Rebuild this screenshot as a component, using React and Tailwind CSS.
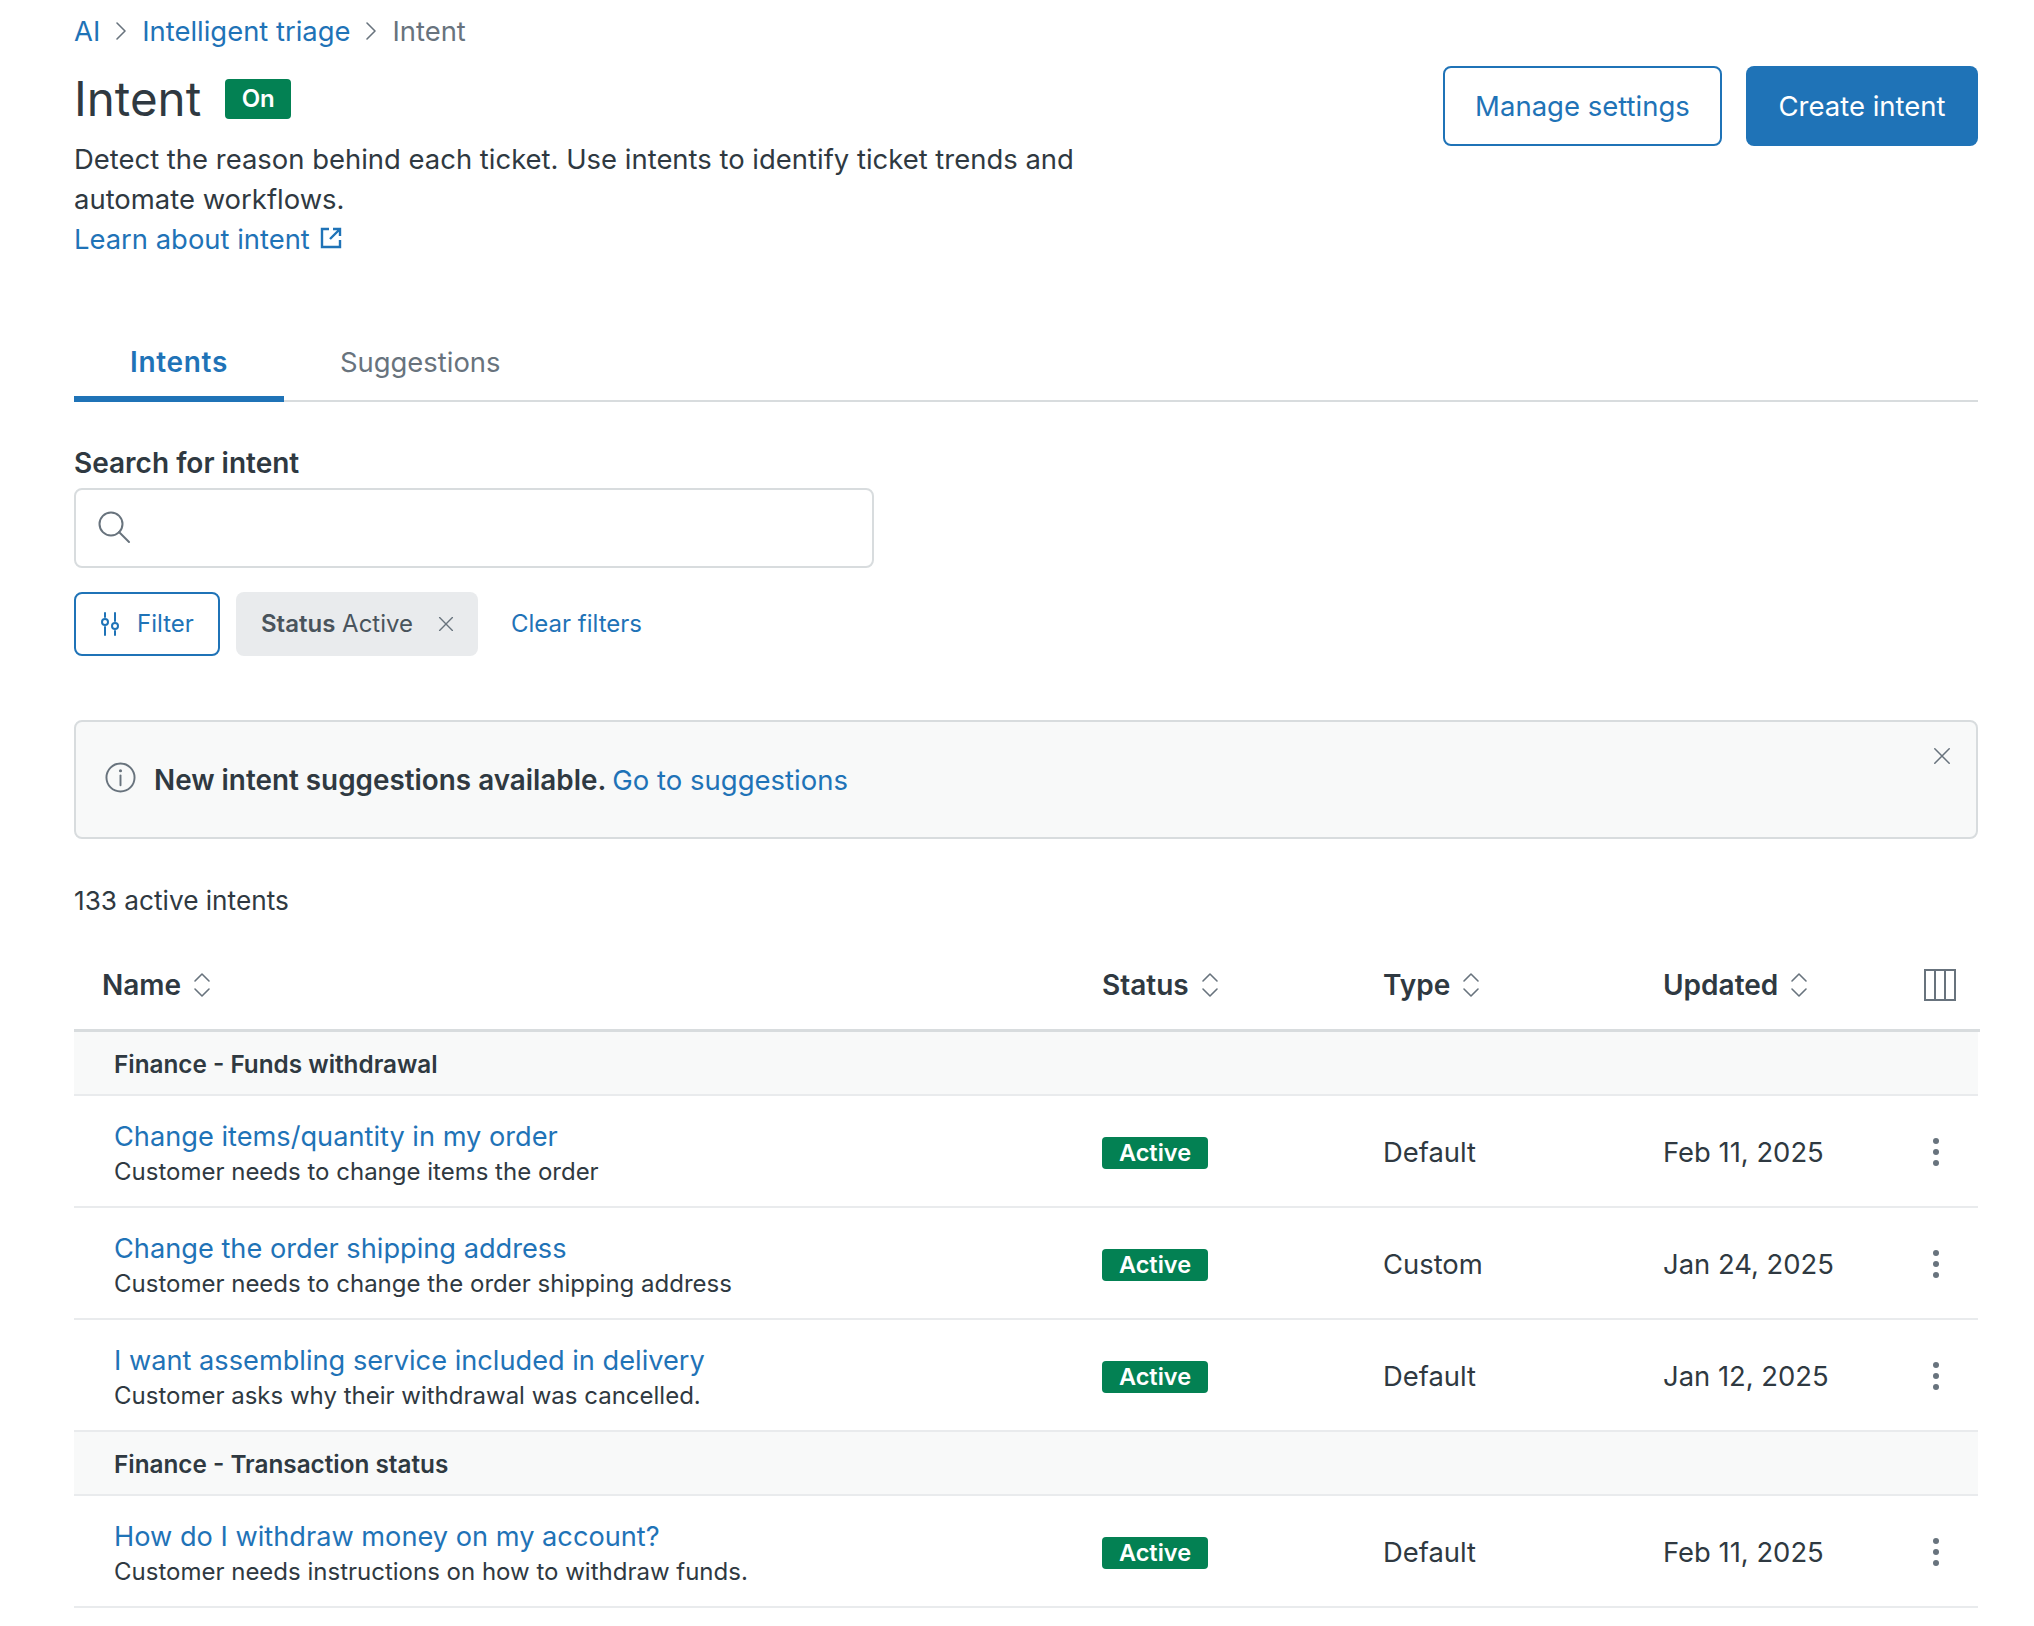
import React from 'react'

const Sort = () => (
  <svg width="20" height="28" viewBox="0 0 20 28" fill="none" stroke="#68737d" strokeWidth="1.6" strokeLinecap="round" strokeLinejoin="round">
    <path d="M3 10 L10 3 L17 10" />
    <path d="M3 18 L10 25 L17 18" />
  </svg>
)

const Kebab = () => (
  <svg width="8" height="28" viewBox="0 0 8 28" fill="#68737d">
    <circle cx="4" cy="3" r="3" />
    <circle cx="4" cy="14" r="3" />
    <circle cx="4" cy="25" r="3" />
  </svg>
)

const Cross = ({ size = 20, color = '#68737d' }) => (
  <svg width={size} height={size} viewBox="0 0 20 20" fill="none" stroke={color} strokeWidth="1.7" strokeLinecap="round">
    <path d="M2 2 L18 18 M18 2 L2 18" />
  </svg>
)

const Chevron = () => (
  <svg width="14" height="20" viewBox="0 0 14 20" fill="none" stroke="#68737d" strokeWidth="1.6" strokeLinecap="round" strokeLinejoin="round">
    <path d="M3 2 L11 10 L3 18" />
  </svg>
)

const Row = ({ title, desc, type, date }) => (
  <div className="grid grid-cols-[1028px_281px_280px_1fr] h-[112px] border-b-2 border-[#e9ebed] items-center">
    <div className="pl-[40px] pt-[1px]">
      <div className="text-[#1f73b7] text-[27.2px] leading-[40px]">{title}</div>
      <div className="text-[#2f3941] text-[24px] leading-[30px]">{desc}</div>
    </div>
    <div>
      <span className="inline-flex items-center justify-center w-[106px] h-[32px] rounded-[4px] bg-[#038153] text-white text-[23.5px] font-semibold">Active</span>
    </div>
    <div className="text-[#2f3941] pt-[2px]">{type}</div>
    <div className="flex items-center justify-between pr-[38px] pt-[2px] text-[#2f3941]">
      <span>{date}</span>
      <Kebab />
    </div>
  </div>
)

const Group = ({ name }) => (
  <div className="h-[64px] bg-[#f8f9f9] border-b-2 border-[#e9ebed] pl-[40px] pt-[1px] flex items-center text-[#2f3941] text-[24.3px] font-semibold">
    {name}
  </div>
)

const HeadCell = ({ label, className }) => (
  <div className={'flex items-center gap-[11px] font-semibold text-[28px] text-[#2f3941] ' + (className || '')}>
    {label}
    <Sort />
  </div>
)

export default function App() {
  return (
    <div className="bg-white min-h-[1626px] pl-[74px] pr-[56px] pt-[11px] text-[27.4px] leading-[40px] text-[#2f3941] font-['Inter',sans-serif]">
      <div className="flex items-center gap-[14px] h-10">
        <span className="text-[#1f73b7]">AI</span>
        <Chevron />
        <span className="text-[#1f73b7]">Intelligent triage</span>
        <Chevron />
        <span className="text-[#68737d]">Intent</span>
      </div>

      <div className="flex justify-between items-start">
        <div className="w-[1030px]">
          <div className="flex items-center gap-[24px] mt-2 h-20">
            <h1 className="text-[47.5px] leading-[80px]">Intent</h1>
            <span className="inline-flex items-center justify-center w-[66px] h-10 rounded-[4px] bg-[#038153] text-white text-[24px] font-semibold">On</span>
          </div>
          <p className="text-[27.45px]">Detect the reason behind each ticket. Use intents to identify ticket trends and automate workflows.</p>
          <a className="flex items-center gap-[10px] text-[#1f73b7]">
            Learn about intent
            <svg width="22" height="22" viewBox="0 0 22 22" fill="none" stroke="#1f73b7" strokeWidth="2.4" className="-mt-[2px]">
              <path d="M9 2 H2 V20 H20 V13" />
              <path d="M13 2 H20 V9 M20 2 L10 12" />
            </svg>
          </a>
        </div>
        <div className="flex gap-6 mt-[15px] text-[27.5px]">
          <button className="w-[279px] h-20 rounded-lg border-2 border-[#1f73b7] text-[#1f73b7]">Manage settings</button>
          <button className="w-[232px] h-20 rounded-lg bg-[#1f73b7] text-white">Create intent</button>
        </div>
      </div>

      <div className="flex mt-[66px] border-b-2 border-[#d8dcde] h-[77px]">
        <div className="w-[210px] text-center h-[77px] pt-[17px] border-b-[6px] border-[#1f73b7] text-[#1f73b7] font-semibold tracking-[0.7px] text-[28px]">Intents</div>
        <div className="h-[77px] px-[56px] pt-[17px] text-[#68737d]">Suggestions</div>
      </div>

      <label className="block mt-[41px] font-semibold text-[28px]">Search for intent</label>
      <div className="mt-[5px] w-[800px] h-[80px] rounded-lg border-2 border-[#d8dcde] flex items-center pl-[21px]">
        <svg width="34" height="34" viewBox="0 0 34 34" fill="none" stroke="#68737d" strokeWidth="2" strokeLinecap="round" className="-mt-[2px]">
          <circle cx="14" cy="14" r="11.5" />
          <path d="M22 22 L32 32" />
        </svg>
      </div>

      <div className="flex items-center mt-6 text-[24px]">
        <button className="w-[146px] h-16 rounded-lg border-2 border-[#1f73b7] text-[#1f73b7] flex items-center pl-[24px] gap-[17px]">
          <svg width="20" height="24" viewBox="0 0 20 24" fill="none" stroke="#1f73b7" strokeWidth="2" strokeLinecap="round">
            <path d="M5 1 V5 M5 15 V23 M15 1 V9 M15 19 V23" />
            <circle cx="5" cy="10" r="3" />
            <circle cx="15" cy="14" r="3" />
          </svg>
          Filter
        </button>
        <div className="ml-4 w-[242px] h-16 rounded-lg bg-[#e9ebed] flex items-center pl-[25px] gap-[25px]">
          <span className="text-[#49545c]"><span className="font-semibold">Status</span> Active</span>
          <Cross size={16} />
        </div>
        <a className="ml-[33px] text-[#1f73b7]">Clear filters</a>
      </div>

      <div className="mt-16 h-[119px] rounded-lg border-2 border-[#d8dcde] bg-[#f8f9f9] relative flex items-center pl-[29px]">
        <svg width="31" height="31" viewBox="0 0 32 32" fill="none" stroke="#68737d" strokeWidth="2" strokeLinecap="round" className="-mt-[4px]">
          <circle cx="16" cy="16" r="14.5" />
          <path d="M16 14 V24" />
          <circle cx="16" cy="9" r="1.6" fill="#68737d" stroke="none" />
        </svg>
        <span className="ml-[18px] font-semibold text-[27.85px]">New intent suggestions available.</span>
        <a className="ml-[6px] text-[#1f73b7] text-[27.5px]">Go to suggestions</a>
        <span className="absolute right-[25px] top-[25px]"><Cross size={18} /></span>
      </div>

      <div className="mt-[42px] text-[26.2px]">133 active intents</div>

      <div className="mt-[19px] h-[92px] border-b-[3px] border-[#d8dcde] -mr-[2px] grid grid-cols-[1028px_281px_280px_1fr] items-center">
        <HeadCell label="Name" className="pl-[28px]" />
        <HeadCell label="Status" />
        <HeadCell label="Type" />
        <div className="flex items-center justify-between pr-[24px]">
          <HeadCell label="Updated" />
          <svg width="32" height="32" viewBox="0 0 32 32" fill="none" stroke="#68737d" strokeWidth="2">
            <rect x="1" y="1" width="30" height="30" />
            <path d="M11 1 V31 M21 1 V31" />
          </svg>
        </div>
      </div>

      <Group name="Finance - Funds withdrawal" />
      <Row title="Change items/quantity in my order" desc="Customer needs to change items the order" type="Default" date="Feb 11, 2025" />
      <Row title="Change the order shipping address" desc="Customer needs to change the order shipping address" type="Custom" date="Jan 24, 2025" />
      <Row title="I want assembling service included in delivery" desc="Customer asks why their withdrawal was cancelled." type="Default" date="Jan 12, 2025" />
      <Group name="Finance - Transaction status" />
      <Row title="How do I withdraw money on my account?" desc="Customer needs instructions on how to withdraw funds." type="Default" date="Feb 11, 2025" />
    </div>
  )
}
